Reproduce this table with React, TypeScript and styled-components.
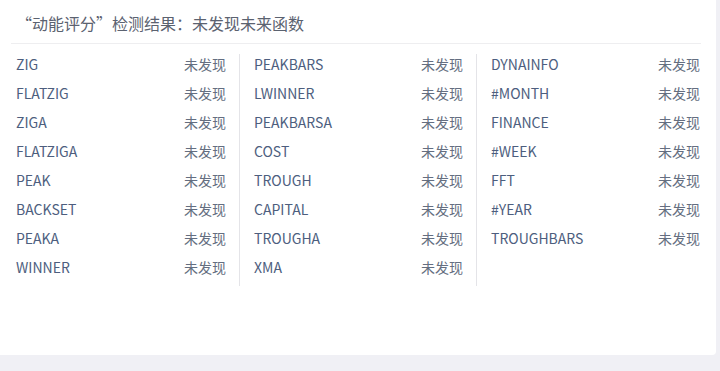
import styled, { createGlobalStyle } from "styled-components";

const GlobalStyle = createGlobalStyle`
  html, body {
    margin: 0;
    padding: 0;
    background: #f0f0f5;
  }
  body {
    font-family: "Noto Sans CJK SC", "Noto Sans", sans-serif;
  }
`;

const Panel = styled.div`
  width: 716px;
  height: 355px;
  background: #ffffff;
  border-radius: 0 0 4px 0;
  box-sizing: border-box;
`;

const Header = styled.div`
  margin: 0 15px 0 11px;
  height: 44px;
  box-sizing: border-box;
  border-bottom: 1px solid #eeeef0;
  display: flex;
  align-items: center;
  padding: 3px 0 0 5px;
  font-size: 16px;
  color: #5b6270;
`;

const Grid = styled.div`
  display: grid;
  grid-template-columns: repeat(3, 237px);
  padding: 10px 0 0 2px;
  align-items: start;
`;

const Column = styled.div<{ $first?: boolean }>`
  border-left: ${(p) => (p.$first ? "none" : "1px solid #e4e4e8")};
  padding: 0 13px 0 14px;
`;

const Row = styled.div`
  height: 20px;
  margin-bottom: 9px;
  display: flex;
  align-items: center;
  justify-content: space-between;
  font-size: 14px;
  line-height: 20px;
`;

const Name = styled.span`
  color: #4d5e7e;
`;

const Status = styled.span`
  color: #646e80;
`;

const columns = [
  ["ZIG", "FLATZIG", "ZIGA", "FLATZIGA", "PEAK", "BACKSET", "PEAKA", "WINNER"],
  ["PEAKBARS", "LWINNER", "PEAKBARSA", "COST", "TROUGH", "CAPITAL", "TROUGHA", "XMA"],
  ["DYNAINFO", "#MONTH", "FINANCE", "#WEEK", "FFT", "#YEAR", "TROUGHBARS"],
];

const rowCount = Math.max(...columns.map((c) => c.length));

export default function App() {
  return (
    <>
      <GlobalStyle />
      <Panel>
        <Header>
          <span>“动能评分”检测结果：</span>
          <span>未发现未来函数</span>
        </Header>
        <Grid>
          {columns.map((names, ci) => (
            <Column key={ci} $first={ci === 0} style={{ height: rowCount * 29 }}>
              {names.map((name) => (
                <Row key={name}>
                  <Name>{name}</Name>
                  <Status>未发现</Status>
                </Row>
              ))}
            </Column>
          ))}
        </Grid>
      </Panel>
    </>
  );
}
